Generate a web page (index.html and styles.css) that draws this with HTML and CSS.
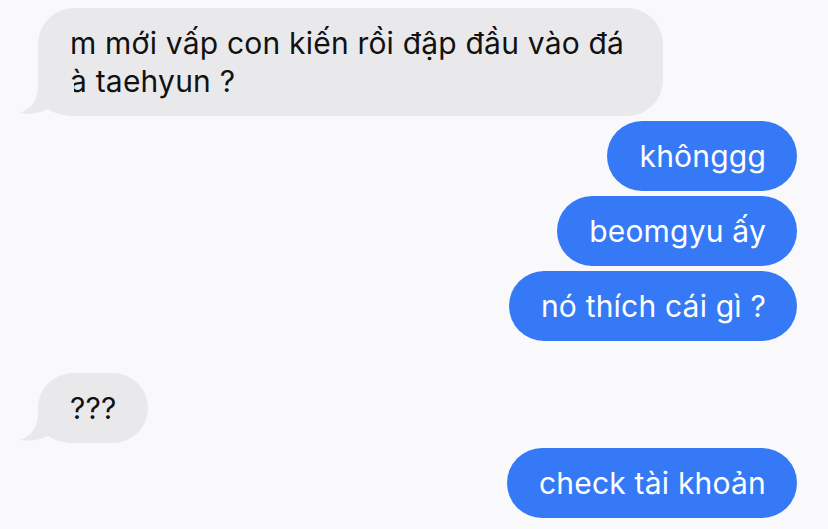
FILE: index.html
```html
<!DOCTYPE html>
<html lang="vi">
<head>
	<meta charset="UTF-8">
	<title>Tin nhắn</title>
	<link rel="stylesheet" href="styles.css">
</head>
<body>
	<div id="chat">
		<div class="msg in tail">
			m mới vấp con kiến rồi đập đầu vào đá à taehyun ?
			<svg class="tail_svg" width="56" height="36" viewBox="0 0 56 36"><path d="M20 0 L20 6 C20 22 12 30 1 33 C14 35 24 32 30 29 C38 34 46 36 56 36 L56 0 Z"/></svg>
		</div>
		<div class="msg out">khônggg</div>
		<div class="msg out">beomgyu ấy</div>
		<div class="msg out">nó thích cái gì ?</div>
		<div class="msg in tail gap">
			???
			<svg class="tail_svg" width="56" height="36" viewBox="0 0 56 36"><path d="M20 0 L20 6 C20 22 12 30 1 33 C14 35 24 32 30 29 C38 34 46 36 56 36 L56 0 Z"/></svg>
		</div>
		<div class="msg out">check tài khoản</div>
	</div>
</body>
</html>
```

FILE: styles.css
```css
* {
	margin: 0;
	padding: 0;
	box-sizing: border-box;
}
body {
	background-color: #f9f9fb;
	font-family: Inter, "Noto Sans", sans-serif;
	overflow: hidden;
}
#chat {
	display: flex;
	flex-direction: column;
	gap: 5px;
	padding: 8px 31px 0 38px;
}
.msg {
	position: relative;
	max-width: 625px;
	padding: 16px 31px 16px 32px;
	border-radius: 36px;
	font-size: 30px;
	line-height: 38px;
	letter-spacing: 0.2px;
}
.in {
	align-self: flex-start;
	background-color: #e9e9eb;
	color: #111;
}
.out {
	align-self: flex-end;
	background-color: #3579f6;
	color: #fff;
}
.gap {
	margin-top: 27px;
}
.tail_svg {
	position: absolute;
	left: -20px;
	bottom: 0;
	fill: #e9e9eb;
}
```
